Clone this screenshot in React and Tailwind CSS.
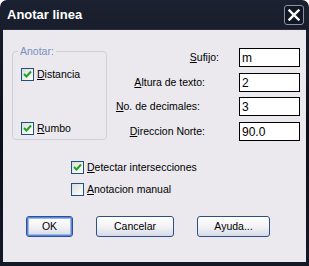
import React from 'react';

const Check = ({ checked }) => (
  <span className="flex h-[13px] w-[13px] shrink-0 items-center justify-center border border-[#1c5180] bg-gradient-to-br from-[#dcdcd7] to-white">
    {checked && (
      <svg width="11" height="11" viewBox="0 0 11 11">
        <polyline points="2,5 4.5,7.5 9,2.5" fill="none" stroke="#21a121" strokeWidth="2" />
      </svg>
    )}
  </span>
);

const CheckRow = ({ checked, mnemonic, rest, className = '' }) => (
  <div className={`flex items-center gap-[3px] ${className}`}>
    <Check checked={checked} />
    <span className="leading-[13px]">
      <u>{mnemonic}</u>
      {rest}
    </span>
  </div>
);

// one row of the form on the right: label + text box
const Field = ({ mnemonic, rest, value, gap, className = '' }) => (
  <div className={`flex h-[19px] items-center ${className}`}>
    <span className="whitespace-nowrap" style={{ marginRight: gap }}>
      <u>{mnemonic}</u>
      {rest}
    </span>
    <div className="flex h-[19px] w-[61px] items-center border border-black bg-white pl-[2px] text-[12px]">
      {value}
    </div>
  </div>
);

const Button = ({ children, width, primary }) => (
  <button
    className={`flex h-[21px] items-center justify-center rounded-[3px] border bg-gradient-to-b from-white via-[#f3f3f6] to-[#d7dbe6] text-[10.5px] text-black ${
      primary
        ? 'border-[#2b4f9a] shadow-[inset_0_0_0_1px_#5a86d6,inset_0_0_0_2px_#9ab8ee]'
        : 'border-[#2d4f8a]'
    }`}
    style={{ width }}
  >
    {children}
  </button>
);

export default function App() {
  return (
    <div className="flex h-[266px] w-[309px] flex-col overflow-hidden rounded-t-[7px] bg-gradient-to-b from-[#1c2131] via-[#0c0f19] to-[#141926] font-['Liberation_Sans',Arial,sans-serif] text-[10.5px] text-black">
      {/* title bar */}
      <div className="flex h-[29px] shrink-0 items-center justify-between pl-[7px] pr-[5px]">
        <span className="text-[13px] font-bold text-white">Anotar linea</span>
        <div className="flex h-[20px] w-[20px] items-center justify-center rounded-[3px] border border-[#8a93a6] bg-[#121725]">
          <svg width="12" height="12" viewBox="0 0 12 12">
            <path d="M1.5 1.5 L10.5 10.5 M10.5 1.5 L1.5 10.5" stroke="white" strokeWidth="2.4" strokeLinecap="square" />
          </svg>
        </div>
      </div>

      {/* dialog body */}
      <div className="mx-[3px] mb-[4px] flex flex-1 flex-col border-t border-[#2a3040] bg-[#ebe9ee]">
        <div className="flex">
          {/* group box */}
          <div className="ml-[9px] mt-[21px] flex h-[89px] w-[95px] flex-col rounded-[4px] border border-[#d0d0d9]">
            <span className="-mt-[7px] ml-[5px] w-fit bg-[#ebe9ee] px-[2px] leading-[13px] text-[#7b8fbb]">
              Anotar:
            </span>
            <CheckRow checked mnemonic="D" rest="istancia" className="ml-[8px] mt-[10px]" />
            <CheckRow checked mnemonic="R" rest="umbo" className="ml-[8px] mt-[41px]" />
          </div>

          {/* fields */}
          <div className="flex flex-1 flex-col items-end pr-[6px] pt-[18px]">
            <Field mnemonic="S" rest="ufijo:" value="m" gap={20} />
            <Field mnemonic="A" rest="ltura de texto:" value="2" gap={34} className="mt-[6px]" />
            <Field mnemonic="N" rest="o. de decimales:" value="3" gap={39} className="mt-[5px]" />
            <Field mnemonic="D" rest="ireccion Norte:" value="90.0" gap={34} className="mt-[6px]" />
          </div>
        </div>

        <CheckRow checked mnemonic="D" rest="etectar intersecciones" className="ml-[68px] mt-[20px]" />
        <CheckRow mnemonic="A" rest="notacion manual" className="ml-[68px] mt-[9px]" />

        <div className="ml-[23px] mt-[20px] flex gap-[23px]">
          <Button width={47} primary>OK</Button>
          <Button width={78}>Cancelar</Button>
          <Button width={73}>Ayuda...</Button>
        </div>
      </div>
    </div>
  );
}
